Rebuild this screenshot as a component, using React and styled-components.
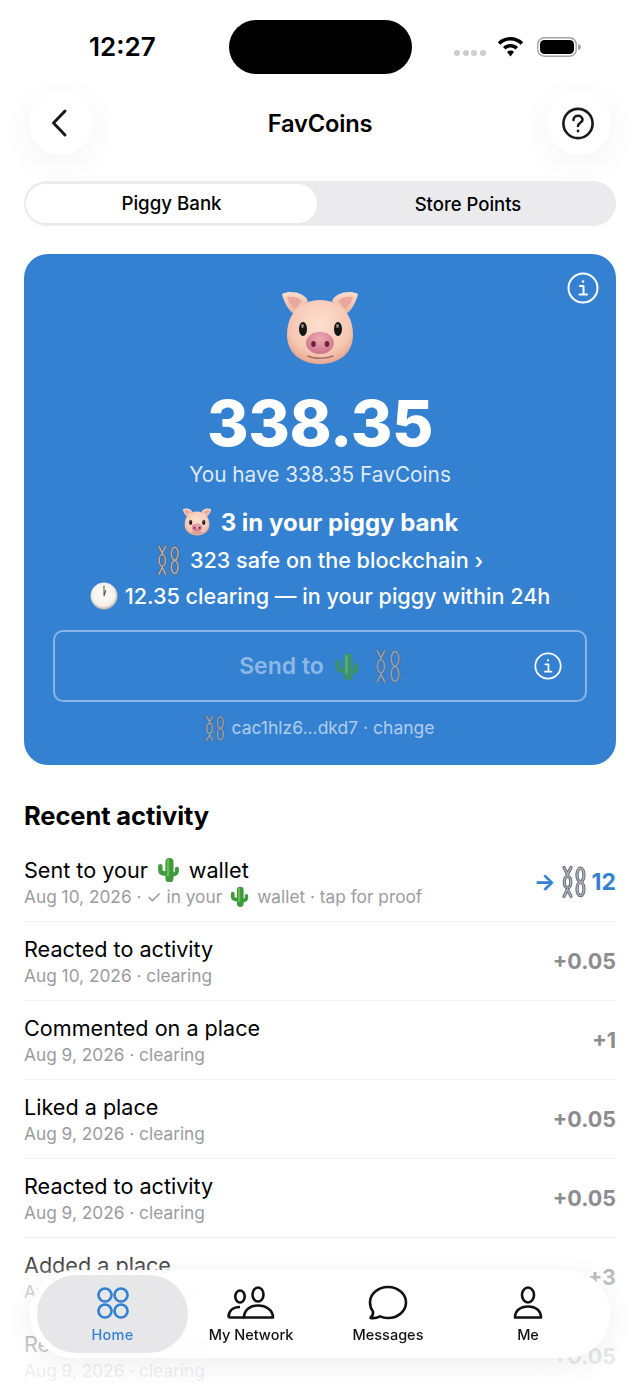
import React from "react";
import styled, { createGlobalStyle } from "styled-components";

const GlobalStyle = createGlobalStyle`
  html, body { margin: 0; padding: 0; background: #fff; }
  body { font-family: Inter, "Noto Sans", sans-serif; color: #000; }
`;

const Screen = styled.div`
  position: relative;
  width: 640px;
  height: 1390px;
  overflow: hidden;
  background: #fff;
`;

const StatusBar = styled.div`
  height: 91px;
  display: flex;
  align-items: flex-start;
  box-sizing: border-box;
  padding-top: 20px;
`;

const Clock = styled.div`
  width: 229px;
  box-sizing: border-box;
  padding-left: 89px;
  font-size: 26px;
  font-weight: 600;
  line-height: 54px;
`;

const Island = styled.div`
  width: 183px;
  height: 54px;
  border-radius: 27px;
  background: #000;
`;

const StatusIcons = styled.div`
  display: flex;
  align-items: center;
  gap: 11px;
  margin-left: 42px;
  height: 54px;
`;

const SignalDots = styled.div`
  display: flex;
  gap: 2.5px;
  margin-top: 12px;
`;

const SignalDot = styled.span`
  width: 6px;
  height: 6px;
  border-radius: 50%;
  background: #cdcdcf;
`;

const Battery = styled.svg`
  margin-left: 2px;
`;

const NavBar = styled.header`
  display: flex;
  align-items: center;
  justify-content: space-between;
  padding: 0 29px;
  height: 64px;
`;

const RoundButton = styled.button`
  width: 64px;
  height: 64px;
  border: 0;
  border-radius: 50%;
  padding: 0;
  background: #fff;
  color: #111;
  display: flex;
  align-items: center;
  justify-content: center;
  box-shadow: 0 8px 36px rgba(0, 0, 0, 0.05);
`;

const Title = styled.h1`
  margin: 0;
  font-size: 23.7px;
  font-weight: 600;
  letter-spacing: -0.2px;
`;

const Segments = styled.div`
  display: flex;
  height: 45px;
  margin: 26px 24px 0;
  padding: 3px 2px;
  box-sizing: border-box;
  background: #ebebee;
  border-radius: 23px;
`;

const Segment = styled.div`
  flex: ${(p) => (p.$active ? "0 0 291px" : "1")};
  box-sizing: border-box;
  padding-left: ${(p) => (p.$active ? "0" : "5px")};
  display: flex;
  align-items: center;
  justify-content: center;
  font-size: ${(p) => (p.$active ? "18.7px" : "18.5px")};
  font-weight: 500;
  border-radius: 20px;
  background: ${(p) => (p.$active ? "#fff" : "transparent")};
`;

const Card = styled.section`
  position: relative;
  height: 511px;
  margin: 28px 24px 0;
  box-sizing: border-box;
  padding-top: 37px;
  background: #3481d2;
  border-radius: 24px;
  color: #fff;
  display: flex;
  flex-direction: column;
  align-items: center;
`;

const CornerInfo = styled.div`
  position: absolute;
  top: 18px;
  right: 17px;
  display: flex;
`;

const Amount = styled.div`
  margin-top: 18px;
  font-size: 63.5px;
  line-height: 76px;
  font-weight: 800;
  letter-spacing: -0.4px;
`;

const Subtitle = styled.div`
  margin-top: 1px;
  font-size: 20.8px;
  line-height: 26px;
  color: rgba(255, 255, 255, 0.85);
`;

const StatLine = styled.div`
  display: flex;
  align-items: center;
  gap: ${(p) => p.$gap}px;
  height: 36px;
  margin-top: ${(p) => p.$top}px;
  font-size: ${(p) => (p.$strong ? "24px" : "21.6px")};
  font-weight: ${(p) => (p.$strong ? 700 : 500)};
  white-space: pre;
`;

const SendButton = styled.div`
  position: relative;
  align-self: stretch;
  height: 72px;
  margin: 16px 29px 0;
  box-sizing: border-box;
  border: 2px solid rgba(255, 255, 255, 0.42);
  border-radius: 10px;
  display: flex;
  align-items: center;
  justify-content: center;
  gap: 10px;
  font-size: 23px;
  font-weight: 600;
`;

const SendLabel = styled.span`
  color: rgba(255, 255, 255, 0.45);
`;

const Faded = styled.span`
  display: flex;
  opacity: ${(p) => p.$opacity || 0.65};
`;

const SendCactus = styled(Faded)`
  margin-right: 5px;
`;

const SendInfo = styled.span`
  position: absolute;
  right: 23px;
  top: 20px;
  display: flex;
`;

const Wallet = styled.div`
  display: flex;
  align-items: center;
  gap: 6px;
  margin-top: 13px;
  font-size: 17.5px;
  line-height: 26px;
  color: rgba(255, 255, 255, 0.62);
`;

const Activity = styled.section`
  padding: 30px 24px 0;
`;

const SectionTitle = styled.h2`
  margin: 0;
  height: 48px;
  font-size: 25.5px;
  line-height: 42px;
  font-weight: 700;
  letter-spacing: -0.1px;
`;

const Row = styled.div`
  height: 79px;
  box-sizing: border-box;
  display: flex;
  align-items: center;
  justify-content: space-between;
  border-bottom: 1px solid #f0f0f2;
`;

const RowText = styled.div`
  display: flex;
  flex-direction: column;
`;

const RowTitle = styled.div`
  display: flex;
  align-items: center;
  gap: 9px;
  height: 28px;
  font-size: 21.6px;
  font-weight: 400;
  margin-bottom: 1px;
`;

const RowMeta = styled.div`
  display: flex;
  align-items: center;
  gap: 8px;
  height: 24px;
  font-size: 17.3px;
  color: #9b9b9f;
  white-space: nowrap;
`;

const RowAmount = styled.div`
  display: flex;
  align-items: center;
  gap: 6px;
  font-size: ${(p) => (p.$sent ? "23px" : "21.5px")};
  font-weight: 700;
  color: ${(p) => (p.$sent ? "#3481d2" : "#8c8c90")};
`;

const BottomFade = styled.div`
  position: absolute;
  left: 0;
  right: 0;
  bottom: 0;
  height: 150px;
  background: linear-gradient(
    to bottom,
    rgba(255, 255, 255, 0) 0%,
    rgba(255, 255, 255, 0.45) 25%,
    rgba(255, 255, 255, 0.78) 70%,
    rgba(255, 255, 255, 0.86) 100%
  );
`;

const TabBar = styled.nav`
  position: absolute;
  left: 30px;
  top: 1270px;
  width: 580px;
  height: 88px;
  box-sizing: border-box;
  padding: 5px 7px;
  display: flex;
  border-radius: 44px;
  background: rgba(255, 255, 255, 0.9);
  backdrop-filter: blur(6px);
  box-shadow: 0 6px 30px rgba(0, 0, 0, 0.07);
`;

const Tab = styled.div`
  width: ${(p) => p.$width}px;
  height: 78px;
  border-radius: 39px;
  box-sizing: border-box;
  padding-top: 9px;
  display: flex;
  flex-direction: column;
  align-items: center;
  gap: 3px;
  font-size: 14.5px;
  font-weight: 500;
  letter-spacing: ${(p) => (p.$active ? "0.2px" : "0")};
  color: ${(p) => (p.$active ? "#3481d2" : "#111")};
  background: ${(p) => (p.$active ? "rgba(228, 228, 231, 0.88)" : "transparent")};
`;

const TabIcon = styled.div`
  height: 38px;
  display: flex;
  align-items: center;
`;

const TabLabel = styled.span`
  line-height: 20px;
`;

// Emoji are drawn, no colour emoji font on this machine
const Pig = ({ size }) => (
  <svg width={size} height={size * 0.95} viewBox="0 0 80 76">
    <defs>
      <radialGradient id="pigFace" cx="50%" cy="38%" r="68%">
        <stop offset="0%" stopColor="#fde0cf" />
        <stop offset="68%" stopColor="#f6c7b2" />
        <stop offset="100%" stopColor="#dd9a88" />
      </radialGradient>
      <linearGradient id="pigEar" x1="0" y1="0" x2="0" y2="1">
        <stop offset="0%" stopColor="#fadccb" />
        <stop offset="100%" stopColor="#eeb09e" />
      </linearGradient>
      <radialGradient id="pigSnout" cx="50%" cy="30%" r="75%">
        <stop offset="0%" stopColor="#eda9b2" />
        <stop offset="100%" stopColor="#c9708a" />
      </radialGradient>
    </defs>
    <path d="M2 3 C10 -1 24 1 28 10 L15 24 C9 20 4 12 2 3Z" fill="url(#pigEar)" />
    <path d="M78 3 C70 -1 56 1 52 10 L65 24 C71 20 76 12 78 3Z" fill="url(#pigEar)" />
    <path d="M7 6 C12 5 18 6 22 10 L15 18 C11 15 8 11 7 6Z" fill="#eaa79b" />
    <path d="M73 6 C68 5 62 6 58 10 L65 18 C69 15 72 11 73 6Z" fill="#eaa79b" />
    <path d="M40 9 C60 9 73 23 73 44 C73 63 58 73 40 73 C22 73 7 63 7 44 C7 23 20 9 40 9Z" fill="url(#pigFace)" />
    <ellipse cx="23" cy="38" rx="4" ry="7" fill="#151515" />
    <ellipse cx="58" cy="38" rx="4" ry="7" fill="#151515" />
    <ellipse cx="22.500" cy="35" rx="1.500" ry="2" fill="#8a8a8a" />
    <ellipse cx="57.500" cy="35" rx="1.500" ry="2" fill="#8a8a8a" />
    <ellipse cx="40" cy="52" rx="14" ry="11" fill="url(#pigSnout)" />
    <ellipse cx="33.500" cy="53" rx="2.300" ry="3" fill="#6a2238" />
    <ellipse cx="47" cy="53" rx="2.300" ry="3" fill="#6a2238" />
    <path d="M28 65 C34 68 46 68 53 65" fill="none" stroke="#8c4c48" strokeWidth="1.200" strokeLinecap="round" />
  </svg>
);

const ChainStrands = ({ color, width }) => (
  <g fill="none" stroke={color} strokeWidth={width} strokeLinecap="round">
    <path d="M2 1.500 L5.500 8.500 L9 1.500" />
    <ellipse cx="5.500" cy="16" rx="3.300" ry="6" />
    <path d="M2 30.500 L5.500 23.500 L9 30.500" />
    <ellipse cx="18.500" cy="9" rx="3.500" ry="6.800" />
    <ellipse cx="18.500" cy="23" rx="3.500" ry="6.800" />
  </g>
);

const Chains = ({ size }) => (
  <svg width={size} height={size * 1.33} viewBox="0 0 24 32">
    <ChainStrands color="#5f646d" width="3.200" />
    <ChainStrands color="#aeb3ba" width="1.500" />
  </svg>
);

const ClockFace = ({ size }) => (
  <svg width={size} height={size} viewBox="0 0 28 28">
    <defs>
      <radialGradient id="clockFace" cx="48%" cy="45%" r="58%">
        <stop offset="0%" stopColor="#fff" />
        <stop offset="72%" stopColor="#f4f1ea" />
        <stop offset="100%" stopColor="#a9a299" />
      </radialGradient>
    </defs>
    <circle cx="14" cy="14" r="13.500" fill="url(#clockFace)" />
    <path d="M14 14 L14 4 M14 14 L15.800 8.500" stroke="#605b56" strokeWidth="1.100" strokeLinecap="round" />
  </svg>
);

const Cactus = ({ size }) => (
  <svg width={size} height={size * 1.1} viewBox="0 0 24 26">
    <g fill="none" stroke="#3f9a3e" strokeLinecap="round" strokeLinejoin="round">
      <path d="M13 5 V22" strokeWidth="8.500" />
      <path d="M3.500 9.500 V13.500 Q3.500 17 9 17" strokeWidth="4.600" />
      <path d="M20.800 12 V14.500 Q20.800 18 16 18" strokeWidth="4.200" />
    </g>
    <path d="M11.500 3.500 V19" stroke="#6cbd50" strokeWidth="2.500" strokeLinecap="round" />
  </svg>
);

const InfoIcon = ({ size }) => (
  <svg width={size} height={size} viewBox="0 0 32 32" fill="none" stroke="#fff" strokeWidth="2" strokeLinecap="round" strokeLinejoin="round">
    <circle cx="16" cy="16" r="14.500" />
    <circle cx="16" cy="9.500" r="1.300" fill="#fff" stroke="none" />
    <path d="M13 14 H16.500 V22.500 M12.500 22.500 H20" />
  </svg>
);

const ActivityRows = [
  { title: "Reacted to activity", date: "Aug 10, 2026", amount: "+0.05" },
  { title: "Commented on a place", date: "Aug 9, 2026", amount: "+1" },
  { title: "Liked a place", date: "Aug 9, 2026", amount: "+0.05" },
  { title: "Reacted to activity", date: "Aug 9, 2026", amount: "+0.05" },
  { title: "Added a place", date: "Aug 9, 2026", amount: "+3" },
  { title: "Reacted to activity", date: "Aug 9, 2026", amount: "+0.05" },
];

const App = () => {
  return (
    <Screen>
      <GlobalStyle />
      <StatusBar>
        <Clock>12:27</Clock>
        <Island />
        <StatusIcons>
          <SignalDots>
            <SignalDot />
            <SignalDot />
            <SignalDot />
            <SignalDot />
          </SignalDots>
          <svg width="27" height="20" viewBox="0 0 27 20">
            <path d="M13.500 0 C8.500 0 4 2 .8 5.200 L3.300 7.800 C6 5.200 9.500 3.600 13.500 3.600 S21 5.200 23.700 7.800 L26.200 5.200 C23 2 18.500 0 13.500 0Z" fill="#000" />
            <path d="M13.500 7 C10.500 7 7.900 8.200 6 10 L8.500 12.600 C9.800 11.400 11.600 10.600 13.500 10.600 S17.200 11.400 18.500 12.600 L21 10 C19.100 8.200 16.500 7 13.500 7Z" fill="#000" />
            <path d="M13.500 13.500 C12 13.500 10.900 14 10 14.900 L13.500 19.500 L17 14.900 C16.100 14 15 13.500 13.500 13.500Z" fill="#000" />
          </svg>
          <Battery width="44" height="20" viewBox="0 0 44 20">
            <rect x=".8" y=".8" width="38.400" height="18.400" rx="6.500" fill="none" stroke="#a3a3a3" strokeWidth="1.400" />
            <rect x="3" y="3" width="34" height="14" rx="4.500" fill="#000" />
            <path d="M41 7 C43 7.500 44 8.500 44 10 S43 12.500 41 13Z" fill="#a3a3a3" />
          </Battery>
        </StatusIcons>
      </StatusBar>

      <NavBar>
        <RoundButton aria-label="Back">
          <svg width="20" height="30" viewBox="0 0 20 30" fill="none" stroke="#1a1a1a" strokeWidth="3" strokeLinecap="round" strokeLinejoin="round">
            <path d="M14 3 L2.500 15 L14 27" />
          </svg>
        </RoundButton>
        <Title>FavCoins</Title>
        <RoundButton aria-label="Help">
          <svg width="33" height="33" viewBox="0 0 33 33" fill="none" stroke="#1a1a1a" strokeWidth="2.600" strokeLinecap="round">
            <circle cx="16" cy="16.500" r="14.600" />
            <path d="M11.500 13 C11.500 10.300 13.500 8.800 16 8.800 S20.500 10.400 20.500 12.700 C20.500 15.800 16 15.800 16 19" />
            <circle cx="16" cy="24" r="1.400" fill="#1a1a1a" stroke="none" />
          </svg>
        </RoundButton>
      </NavBar>

      <Segments>
        <Segment $active>Piggy Bank</Segment>
        <Segment>Store Points</Segment>
      </Segments>

      <Card>
        <CornerInfo>
          <InfoIcon size={32} />
        </CornerInfo>
        <Pig size={80} />
        <Amount>338.35</Amount>
        <Subtitle>You have 338.35 FavCoins</Subtitle>
        <StatLine $strong $top={16} $gap={9}>
          <Pig size={30} />
          3 in your piggy bank
        </StatLine>
        <StatLine $top={2} $gap={10}>
          <Chains size={23} />
          323 safe on the blockchain ›
        </StatLine>
        <StatLine $top={0} $gap={7}>
          <ClockFace size={28} />
          12.35 clearing — in your piggy within 24h
        </StatLine>
        <SendButton>
          <SendLabel>Send to</SendLabel>
          <SendCactus>
            <Cactus size={26} />
          </SendCactus>
          <Faded>
            <Chains size={26} />
          </Faded>
          <SendInfo>
            <InfoIcon size={28} />
          </SendInfo>
        </SendButton>
        <Wallet>
          <Faded $opacity={0.8}>
            <Chains size={20} />
          </Faded>
          cac1hlz6...dkd7 · change
        </Wallet>
      </Card>

      <Activity>
        <SectionTitle>Recent activity</SectionTitle>
        <Row>
          <RowText>
            <RowTitle>
              Sent to your <Cactus size={23} /> wallet
            </RowTitle>
            <RowMeta>
              Aug 10, 2026 · ✓ in your <Cactus size={19} /> wallet · tap for proof
            </RowMeta>
          </RowText>
          <RowAmount $sent>
            →
            <Chains size={24} />
            12
          </RowAmount>
        </Row>
        {ActivityRows.map((row, i) => (
          <Row key={i}>
            <RowText>
              <RowTitle>{row.title}</RowTitle>
              <RowMeta>{row.date} · clearing</RowMeta>
            </RowText>
            <RowAmount>{row.amount}</RowAmount>
          </Row>
        ))}
      </Activity>

      <BottomFade />

      <TabBar>
        <Tab $active $width={151}>
          <TabIcon>
            <svg width="32" height="32" viewBox="0 0 32 32" fill="none" stroke="#3481d2" strokeWidth="2.700">
              <circle cx="8" cy="8" r="6.500" />
              <circle cx="24" cy="8" r="6.500" />
              <circle cx="8" cy="24" r="6.500" />
              <circle cx="24" cy="24" r="6.500" />
            </svg>
          </TabIcon>
          <TabLabel>Home</TabLabel>
        </Tab>
        <Tab $width={126}>
          <TabIcon>
            <svg width="48" height="34" viewBox="0 0 48 34" fill="none" stroke="#111" strokeWidth="2.600" strokeLinejoin="round">
              <ellipse cx="13" cy="10.500" rx="4.700" ry="6" />
              <ellipse cx="31" cy="8.500" rx="5.500" ry="7" />
              <path d="M1.500 31.500 C1.500 25 6 21 13 21 M1.500 31.500 H17" />
              <path d="M17 31.500 C17 24 23 19.500 31 19.500 S46 24 46 31.500Z" />
            </svg>
          </TabIcon>
          <TabLabel>My Network</TabLabel>
        </Tab>
        <Tab $width={148}>
          <TabIcon>
            <svg width="40" height="36" viewBox="0 0 40 36" fill="none" stroke="#111" strokeWidth="2.600" strokeLinejoin="round">
              <path d="M20 2 C30 2 38 9 38 17.500 S30 33 20 33 C17 33 14.500 32.500 12 31.300 C9 33 6 33.500 2.500 33 C4.500 31 5.500 29 5 26.500 C3 24 2 21 2 17.500 C2 9 10 2 20 2Z" />
            </svg>
          </TabIcon>
          <TabLabel>Messages</TabLabel>
        </Tab>
        <Tab $width={132}>
          <TabIcon>
            <svg width="30" height="34" viewBox="0 0 30 34" fill="none" stroke="#111" strokeWidth="2.600" strokeLinejoin="round">
              <ellipse cx="15" cy="9" rx="6" ry="7.500" />
              <path d="M2 31.500 C2 25 7 20.500 15 20.500 S28 25 28 31.500Z" />
            </svg>
          </TabIcon>
          <TabLabel>Me</TabLabel>
        </Tab>
      </TabBar>
    </Screen>
  );
};

export default App;
